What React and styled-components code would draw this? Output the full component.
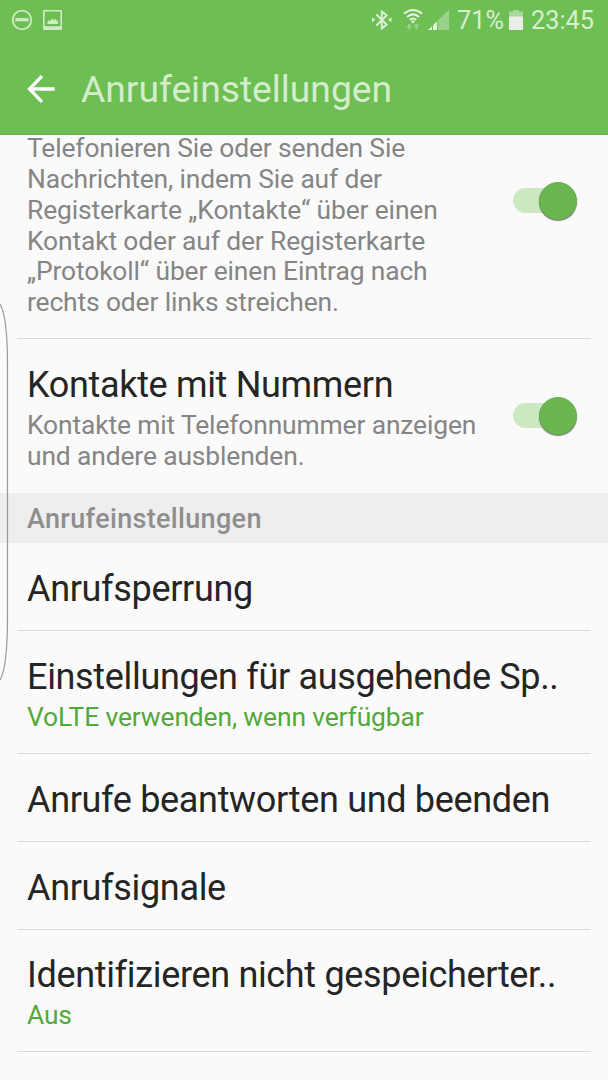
import React from "react";
import styled, { createGlobalStyle } from "styled-components";

const Global = createGlobalStyle`
  * { box-sizing: border-box; }
  body { margin: 0; background: #fafafa; font-family: Roboto, sans-serif; overflow: hidden; }
`;

const Screen = styled.div`
  position: relative;
  display: flex;
  flex-direction: column;
  width: 608px;
  height: 1080px;
  overflow: hidden;
  background: #fafafa;
`;

const Header = styled.header`
  flex: none;
  height: 135px;
  background: #6dbe53;
  border-bottom: 1px solid #65b04d;
`;

const StatusBar = styled.div`
  display: flex;
  justify-content: space-between;
  height: 41px;
  padding: 0 14px 0 11px;
  color: #d9efd2;
`;

const StatusGroup = styled.div`
  display: flex;
  align-items: center;
`;

const StatusText = styled.span`
  margin-left: ${(p) => p.$gap || 0}px;
  font-size: 25.3px;
  line-height: 41px;
  white-space: nowrap;
`;

const TitleBar = styled.div`
  display: flex;
  align-items: center;
  height: 96px;
  padding-left: 27px;
`;

const PageTitle = styled.h1`
  margin: 0 0 0 25px;
  font-size: 37.2px;
  line-height: 44px;
  font-weight: 400;
  color: #d5edcc;
  white-space: nowrap;
`;

const Viewport = styled.main`
  flex: 1;
  min-height: 0;
  overflow: hidden;
`;

const List = styled.div`
  margin-top: ${(p) => p.$scroll}px;
`;

const Row = styled.div`
  display: flex;
  align-items: ${(p) => p.$align || "center"};
  justify-content: space-between;
  height: ${(p) => p.$height}px;
  margin: 0 17px;
  padding: 0 12px 0 10px;
  border-bottom: ${(p) => (p.$last ? "0" : "1px solid #dadada")};
`;

const RowText = styled.div`
  padding: ${(p) => p.$pad || "4px 0 0"};
`;

const RowTitle = styled.div`
  font-size: 36px;
  letter-spacing: -0.33px;
  line-height: 42px;
  margin-bottom: 4px;
  color: #252525;
  white-space: nowrap;
`;

const Description = styled.div`
  font-size: 26.4px;
  letter-spacing: -0.13px;
  line-height: 30.8px;
  color: ${(p) => (p.$accent ? "#53a83a" : "#858585")};
  white-space: nowrap;
`;

const SectionHeader = styled.h2`
  height: 50px;
  margin: 0;
  padding: 1px 27px 0;
  background: #eee;
  color: #8e8e8e;
  font-size: 27px;
  letter-spacing: 0.33px;
  line-height: 50px;
  font-weight: 500;
`;

const Track = styled.div`
  flex: none;
  display: flex;
  align-items: center;
  justify-content: flex-end;
  align-self: center;
  width: 64px;
  height: 25px;
  border-radius: 13px;
  margin: 0 2px 1px 0;
  background: linear-gradient(90deg, #cbe8c1 0 50px, transparent 50px);
`;

const Thumb = styled.div`
  width: 38px;
  height: 38px;
  border-radius: 50%;
  background: #6ab74f;
  border: 1px solid #63af49;
  box-shadow: 0 1px 1px rgba(0, 0, 0, 0.5);
`;

const Edge = styled.svg`
  position: absolute;
  left: 0;
  top: 300px;
  pointer-events: none;
`;

const Icon = styled.svg`
  flex: none;
  margin-left: ${(p) => p.$gap || 0}px;
`;

const Toggle = () => (
  <Track role="switch" aria-checked="true">
    <Thumb />
  </Track>
);

const DndIcon = () => (
  <Icon width="22" height="41" viewBox="0 0 22 41">
    <circle cx="11" cy="20" r="9.3" fill="none" stroke="#d0ebc7" strokeWidth="1.8" />
    <rect x="4.3" y="18.1" width="13.4" height="3.2" fill="#d0ebc7" />
  </Icon>
);

const PictureIcon = () => (
  <Icon $gap={10} width="19" height="41" viewBox="0 0 19 41">
    <path fillRule="evenodd" fill="#d0ebc7" d="M1 10H18Q19 10 19 11V29Q19 30 18 30H1Q0 30 0 29V11Q0 10 1 10ZM1.6 11.6V26.3H17.4V11.6Z" />
    <path fill="#d0ebc7" d="M4.3 24V22.2L5.8 20.4L7.4 20.8L9.3 18.6L10.8 20.2L12.5 19L15 22V24Z" />
  </Icon>
);

const BluetoothIcon = () => (
  <Icon width="20" height="41" viewBox="0 0 20 41">
    <path d="M4.2 14.3L14.7 24.7L9.8 28.4V11.6L14.7 15.3L4.2 25.7" fill="none" stroke="#d9efd2" strokeWidth="2" />
    <path d="M0 17.3L3.4 19.8L0 22.3ZM19.5 17.3L15.8 19.8L19.5 22.3Z" fill="#d9efd2" />
  </Icon>
);

const WifiIcon = () => (
  <Icon $gap={11} width="20" height="41" viewBox="0 0 20 41">
    <g fill="none" stroke="#e3f3de" strokeWidth="2">
      <path d="M1 13.6Q10 6.4 19 13.6" />
      <path d="M4 17Q10 11.8 16 17" />
      <path d="M6.8 20Q10 17 13.2 20" />
    </g>
    <path d="M8 21.3Q10 19.7 12 21.3L10 23.7Z" fill="#e3f3de" />
    <path d="M5 24H7.2V26.3H9L6.1 29.7L3.2 26.3H5ZM12.3 29.5H14.5V26.3H16.4L13.4 23L10.5 26.3H12.3Z" fill="#9bd28a" />
  </Icon>
);

const SignalIcon = () => (
  <Icon $gap={5} width="21" height="41" viewBox="0 0 21 41">
    <path d="M10 20.2L21 9.5V30H10Z" fill="#9bd28a" />
    <path d="M0 30L4 26.2V30ZM5 25.2L9 21.2V30H5Z" fill="#e3f3de" />
  </Icon>
);

const BatteryIcon = () => (
  <Icon $gap={5} width="14" height="41" viewBox="0 0 14 41">
    <path d="M0 11.5H4V10H10V11.5H14V17H0Z" fill="#a9d99a" />
    <rect y="16.5" width="14" height="13.5" fill="#e9eee7" />
  </Icon>
);

const BackIcon = () => (
  <Icon width="29" height="30" viewBox="0 0 29 30">
    <path d="M27.7 15H3M15 2.2L2.5 15L15 27.8" fill="none" stroke="#fff" strokeWidth="3.3" />
  </Icon>
);

export default function App() {
  return (
    <Screen>
      <Global />
      <Header>
        <StatusBar>
          <StatusGroup>
            <DndIcon />
            <PictureIcon />
          </StatusGroup>
          <StatusGroup>
            <BluetoothIcon />
            <WifiIcon />
            <SignalIcon />
            <StatusText $gap={8}>71%</StatusText>
            <BatteryIcon />
            <StatusText $gap={8}>23:45</StatusText>
          </StatusGroup>
        </StatusBar>
        <TitleBar>
          <BackIcon />
          <PageTitle>Anrufeinstellungen</PageTitle>
        </TitleBar>
      </Header>
      <Viewport>
        <List $scroll={-71}>
          <Row $height={275} $align="flex-end">
            <RowText $pad="0 0 20px">
              <Description>
                Telefonieren Sie oder senden Sie<br />
                Nachrichten, indem Sie auf der<br />
                Registerkarte „Kontakte“ über einen<br />
                Kontakt oder auf der Registerkarte<br />
                „Protokoll“ über einen Eintrag nach<br />
                rechts oder links streichen.
              </Description>
            </RowText>
            <Toggle />
          </Row>
          <Row $height={154} $last>
            <RowText>
              <RowTitle>Kontakte mit Nummern</RowTitle>
              <Description>
                Kontakte mit Telefonnummer anzeigen<br />
                und andere ausblenden.
              </Description>
            </RowText>
            <Toggle />
          </Row>
          <SectionHeader>Anrufeinstellungen</SectionHeader>
          <Row $height={88}>
            <RowText $pad="8px 0 0">
              <RowTitle>Anrufsperrung</RowTitle>
            </RowText>
          </Row>
          <Row $height={123}>
            <RowText>
              <RowTitle>Einstellungen für ausgehende Sp..</RowTitle>
              <Description $accent>VoLTE verwenden, wenn verfügbar</Description>
            </RowText>
          </Row>
          <Row $height={88}>
            <RowText $pad="8px 0 0">
              <RowTitle>Anrufe beantworten und beenden</RowTitle>
            </RowText>
          </Row>
          <Row $height={88}>
            <RowText $pad="8px 0 0">
              <RowTitle>Anrufsignale</RowTitle>
            </RowText>
          </Row>
          <Row $height={122}>
            <RowText>
              <RowTitle>Identifizieren nicht gespeicherter..</RowTitle>
              <Description $accent>Aus</Description>
            </RowText>
          </Row>
        </List>
      </Viewport>
      <Edge width="10" height="384" viewBox="0 0 10 384">
        <path d="M0 4Q7.5 16 7.5 65V318Q7.5 367 0 380" fill="none" stroke="#999" strokeWidth="1.2" />
      </Edge>
    </Screen>
  );
}
